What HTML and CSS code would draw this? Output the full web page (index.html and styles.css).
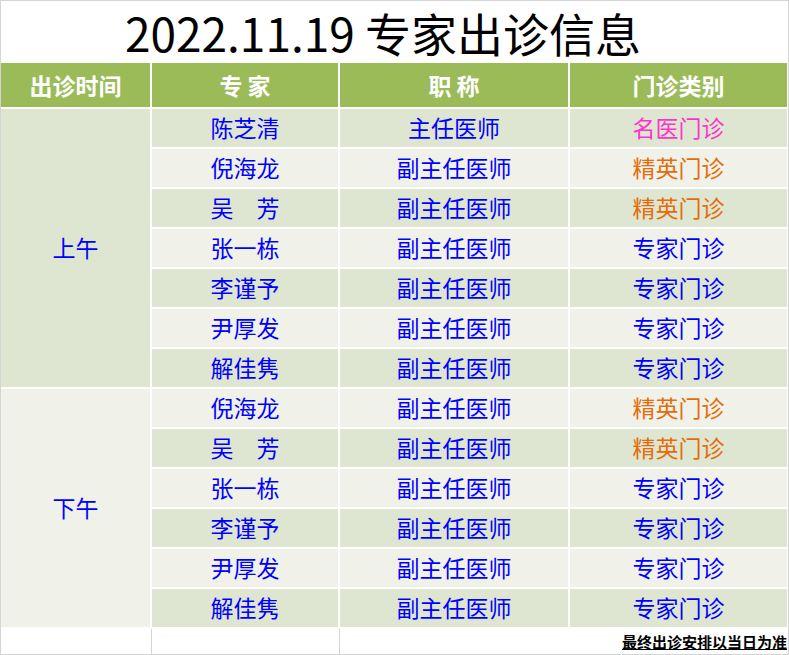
FILE: index.html
```html
<!DOCTYPE html>
<html lang="zh-CN">
<head>
<meta charset="utf-8">
<title>2022.11.19 专家出诊信息</title>
<link rel="stylesheet" href="styles.css">
</head>
<body>
<div class="sheet">
  <div class="title">2022.11.19 专家出诊信息</div>

  <div class="hd">出诊时间</div>
  <div class="hd">专 家</div>
  <div class="hd">职 称</div>
  <div class="hd">门诊类别</div>

  <div class="cell dark am">上午</div>
  <div class="cell pm light">下午</div>

  <div class="cell dark">陈芝清</div><div class="cell dark">主任医师</div><div class="cell dark pink">名医门诊</div>
  <div class="cell light">倪海龙</div><div class="cell light">副主任医师</div><div class="cell light orange">精英门诊</div>
  <div class="cell dark">吴　芳</div><div class="cell dark">副主任医师</div><div class="cell dark orange">精英门诊</div>
  <div class="cell light">张一栋</div><div class="cell light">副主任医师</div><div class="cell light">专家门诊</div>
  <div class="cell dark">李谨予</div><div class="cell dark">副主任医师</div><div class="cell dark">专家门诊</div>
  <div class="cell light">尹厚发</div><div class="cell light">副主任医师</div><div class="cell light">专家门诊</div>
  <div class="cell dark">解佳隽</div><div class="cell dark">副主任医师</div><div class="cell dark">专家门诊</div>
  <div class="cell light">倪海龙</div><div class="cell light">副主任医师</div><div class="cell light orange">精英门诊</div>
  <div class="cell dark">吴　芳</div><div class="cell dark">副主任医师</div><div class="cell dark orange">精英门诊</div>
  <div class="cell light">张一栋</div><div class="cell light">副主任医师</div><div class="cell light">专家门诊</div>
  <div class="cell dark">李谨予</div><div class="cell dark">副主任医师</div><div class="cell dark">专家门诊</div>
  <div class="cell light">尹厚发</div><div class="cell light">副主任医师</div><div class="cell light">专家门诊</div>
  <div class="cell dark">解佳隽</div><div class="cell dark">副主任医师</div><div class="cell dark">专家门诊</div>

  <div class="foot">
    <div class="fcell a"></div>
    <div class="fcell b"></div>
    <div class="fcell c"><span class="note">最终出诊安排以当日为准</span></div>
  </div>
</div>
</body>
</html>
```

FILE: styles.css
```css
html, body {
  margin: 0;
  padding: 0;
  background: #ffffff;
}

.sheet {
  box-sizing: border-box;
  width: 789px;
  height: 655px;
  border: 1px solid #d4d4d4;
  padding-right: 1px;
  background: #ffffff;
  display: grid;
  grid-template-columns: 149px 186px 228px 217px;
  grid-template-rows: 60px 44px repeat(13, 38px) 25px;
  column-gap: 2px;
  row-gap: 2px;
  font-family: "Noto Sans CJK SC", "Noto Sans", sans-serif;
}

.title {
  grid-column: 1 / -1;
  display: flex;
  align-items: center;
  justify-content: center;
  padding-right: 22px;
  padding-top: 2px;
  font-size: 46px;
  color: #000000;
  line-height: 1;
}

.hd {
  background: #9bbb59;
  color: #ffffff;
  font-weight: bold;
  font-size: 23px;
  display: flex;
  align-items: center;
  justify-content: center;
  white-space: pre;
}

.cell {
  display: flex;
  align-items: center;
  justify-content: center;
  font-size: 23px;
  color: #0000ff;
  line-height: 1;
  padding-bottom: 2px;
}

.dark {
  background: #dee6d1;
}

.light {
  background: #f0f2e9;
}

.am {
  grid-column: 1;
  grid-row: 3 / span 7;
}

.pm {
  grid-column: 1;
  grid-row: 10 / span 6;
}

.pink {
  color: #ff33cc;
}

.orange {
  color: #e46c0a;
}

.foot {
  grid-column: 1 / -1;
  grid-row: 16;
  display: grid;
  grid-template-columns: 151px 188px 1fr;
}

.fcell {
  box-sizing: border-box;
}

.fcell.a,
.fcell.b {
  border-right: 1px solid #d4d4d4;
}

.fcell.c {
  display: flex;
  align-items: center;
  justify-content: flex-end;
}

.note {
  font-size: 15px;
  font-weight: bold;
  color: #000000;
  text-decoration: underline;
  line-height: 1;
}
```
